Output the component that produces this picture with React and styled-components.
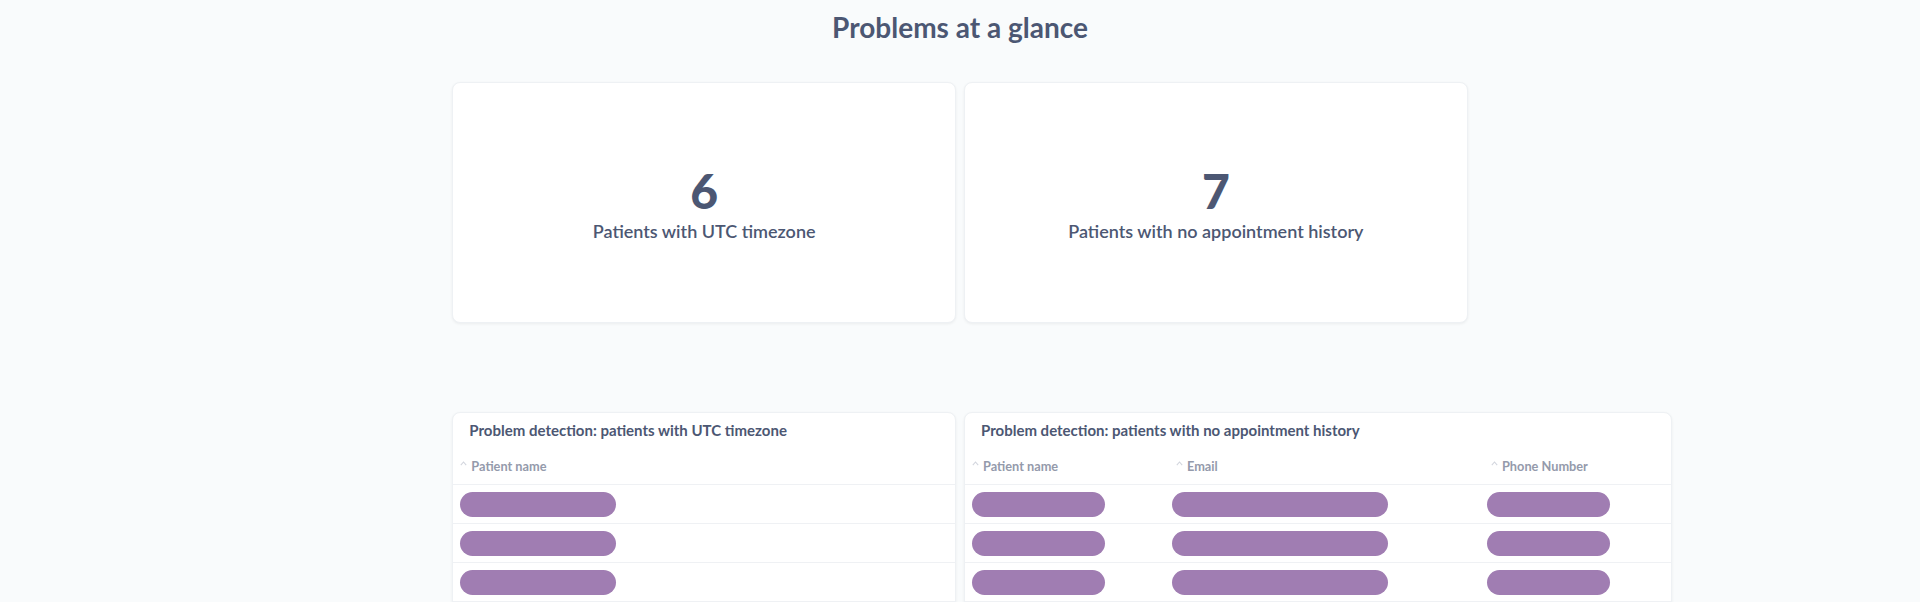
import React from 'react';
import styled, { createGlobalStyle } from 'styled-components';

const GlobalStyle = createGlobalStyle`
  html, body {
    margin: 0;
    padding: 0;
    overflow: hidden;
    background: #f9fbfc;
  }

  body {
    font-family: Lato, "Noto Sans", sans-serif;
    color: #4c5773;
    -webkit-font-smoothing: antialiased;
  }
`;

const Page = styled.main`
  padding: 0 43px;
`;

const Heading = styled.h1`
  box-sizing: border-box;
  height: 82px;
  margin: 0;
  padding-top: 11px;
  text-align: center;
  font-size: 28px;
  font-weight: 700;
  line-height: 1.2;
`;

const Dashboard = styled.div`
  display: grid;
  grid-template-columns: repeat(18, 1fr);
  grid-template-rows: 241px 400px;
  column-gap: 8px;
  row-gap: 89px;
`;

const Card = styled.section`
  grid-column: ${(p) => p.$start} / span ${(p) => p.$span};
  box-sizing: border-box;
  background: #fff;
  border: 1px solid #eef1f4;
  border-radius: 8px;
  box-shadow: 0 1px 3px rgba(0, 0, 0, 0.06);
  overflow: hidden;
`;

const StatCard = styled(Card)`
  display: flex;
  flex-direction: column;
  align-items: center;
  justify-content: center;
  padding-top: 5px;
`;

const StatValue = styled.div`
  font-size: 48px;
  font-weight: 900;
  line-height: 1;
`;

const StatLabel = styled.div`
  margin-top: 6px;
  font-size: 18px;
  font-weight: 600;
  line-height: 1.2;
`;

const TableTitle = styled.h2`
  margin: 0;
  padding: 8px 16px 8px;
  font-size: 15px;
  font-weight: 700;
  line-height: 1.2;
`;

const Row = styled.div`
  display: grid;
  grid-template-columns: ${(p) => p.$cols};
  box-sizing: border-box;
  height: ${(p) => (p.$head ? 38 : 39)}px;
  align-items: ${(p) => (p.$head ? 'center' : 'start')};
  padding-top: ${(p) => (p.$head ? 0 : 7)}px;
  border-bottom: 1px solid #eff1f4;
`;

const HeadCell = styled.div`
  display: flex;
  align-items: center;
  gap: 4px;
  padding-left: ${(p) => 7 + (p.$indent || 0)}px;
  font-size: 12.75px;
  font-weight: 700;
  color: #949aab;
`;

const Cell = styled.div`
  padding-left: 7px;
`;

const Pill = styled.div`
  width: ${(p) => p.$w}px;
  height: 25px;
  border-radius: 13px;
  background: #a07db2;
`;

function SortCaret() {
  return (
    <svg width="7" height="5" viewBox="0 0 7 5" style={{ marginTop: -4 }}>
      <polyline points="0.8,4.2 3.5,1 6.2,4.2" fill="none" stroke="#d3d6de" strokeWidth="1.1" />
    </svg>
  );
}

function DataTable({ title, columns, rows }) {
  const cols = columns.map((c) => c.width).join(' ');
  return (
    <>
      <TableTitle>{title}</TableTitle>
      <Row $head $cols={cols}>
        {columns.map((c) => (
          <HeadCell key={c.label} $indent={c.indent}>
            <SortCaret />
            {c.label}
          </HeadCell>
        ))}
      </Row>
      {Array.from({ length: rows }).map((_, i) => (
        <Row key={i} $cols={cols}>
          {columns.map((c) => (
            <Cell key={c.label}>
              <Pill $w={c.pill} />
            </Cell>
          ))}
        </Row>
      ))}
    </>
  );
}

const utcColumns = [{ label: 'Patient name', width: '1fr', pill: 156 }];

const historyColumns = [
  { label: 'Patient name', width: '200px', pill: 133 },
  { label: 'Email', width: '315px', pill: 216, indent: 4 },
  { label: 'Phone Number', width: '1fr', pill: 123, indent: 4 },
];

export default function App() {
  return (
    <>
      <GlobalStyle />
      <Page>
        <Heading>Problems at a glance</Heading>
        <Dashboard>
          <StatCard $start={5} $span={5}>
            <StatValue>6</StatValue>
            <StatLabel>Patients with UTC timezone</StatLabel>
          </StatCard>
          <StatCard $start={10} $span={5}>
            <StatValue>7</StatValue>
            <StatLabel>Patients with no appointment history</StatLabel>
          </StatCard>
          <Card $start={5} $span={5}>
            <DataTable
              title="Problem detection: patients with UTC timezone"
              columns={utcColumns}
              rows={6}
            />
          </Card>
          <Card $start={10} $span={7}>
            <DataTable
              title="Problem detection: patients with no appointment history"
              columns={historyColumns}
              rows={7}
            />
          </Card>
        </Dashboard>
      </Page>
    </>
  );
}
